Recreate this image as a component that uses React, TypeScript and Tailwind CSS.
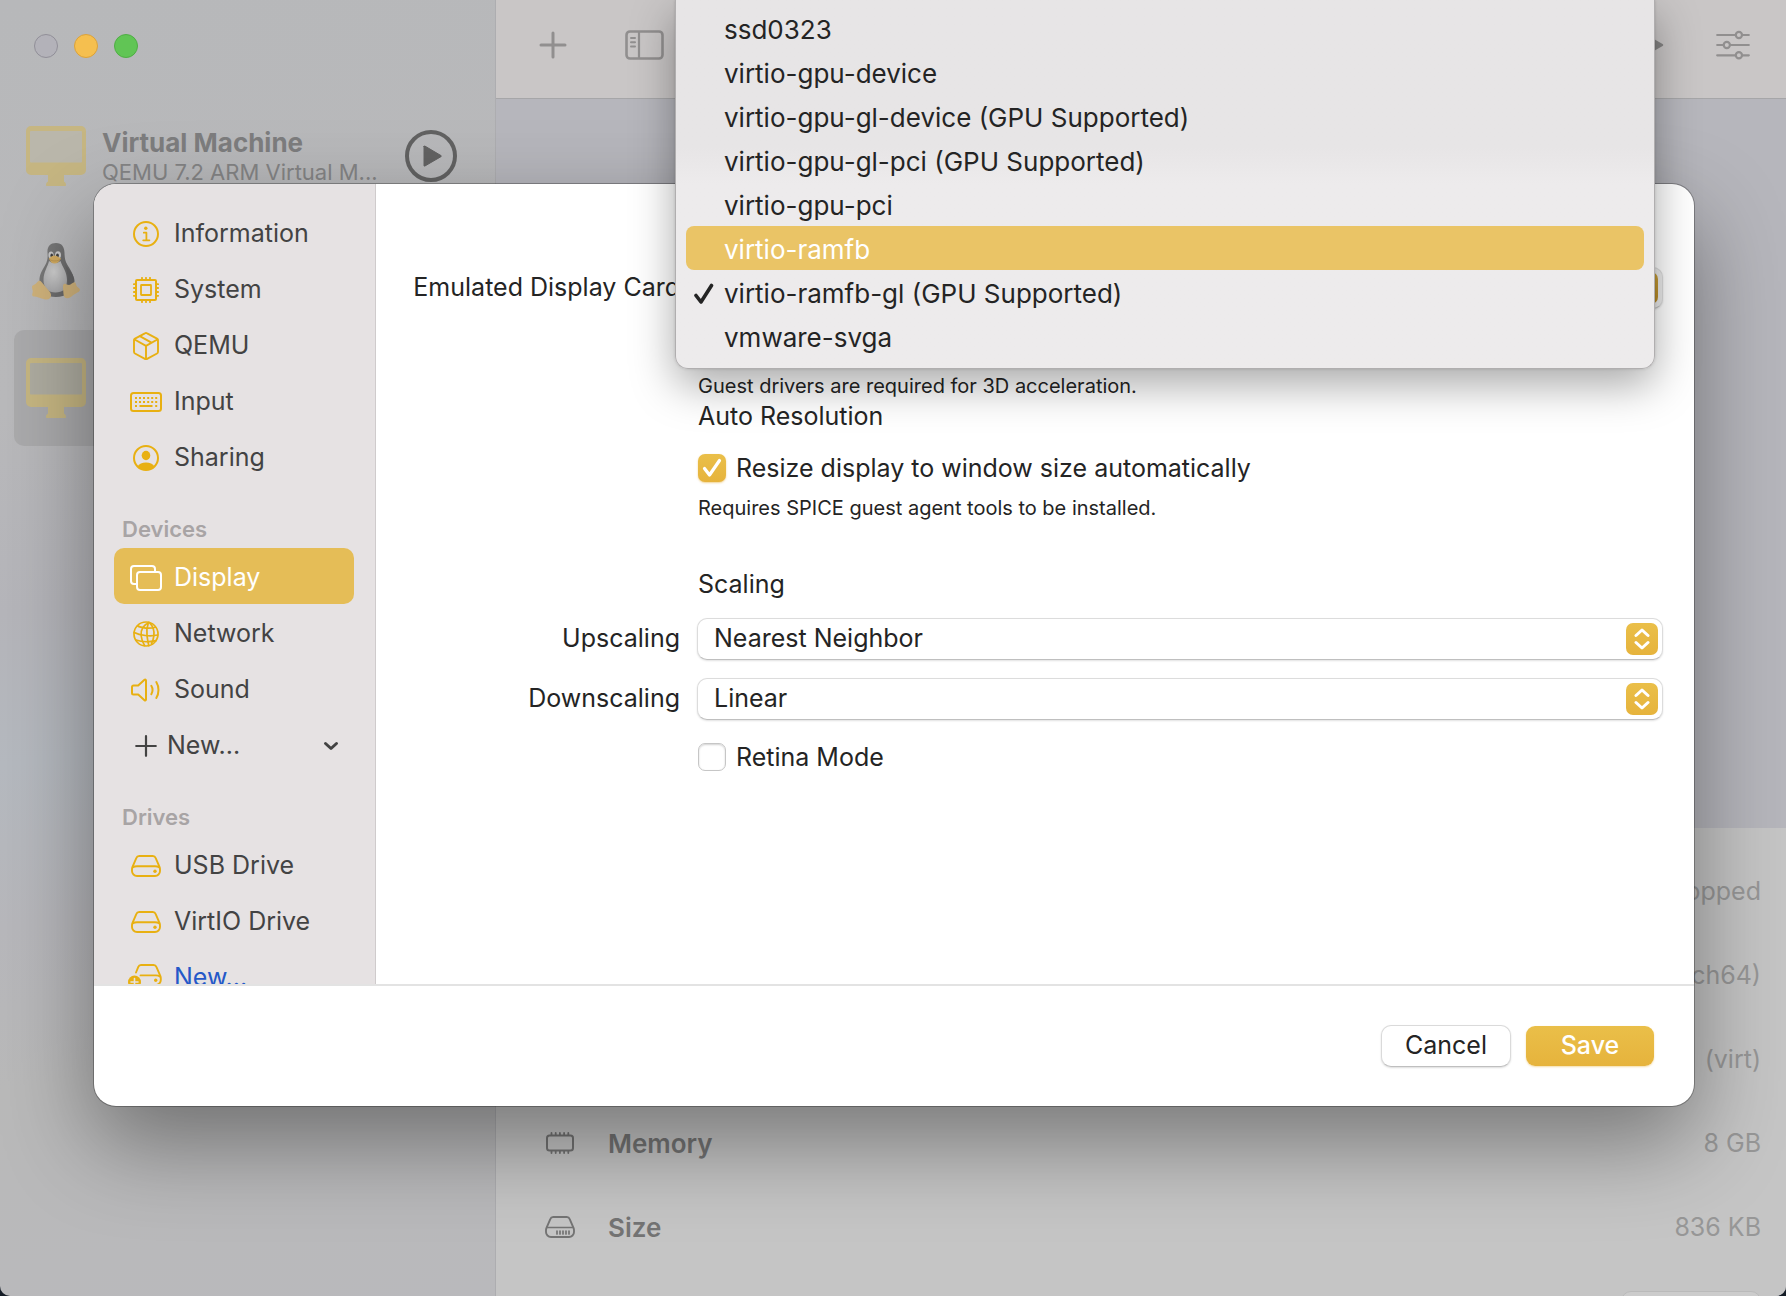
import React, { useId, useState } from "react";
import type { ReactNode } from "react";

/* ---------- icons ---------- */

type IconProps = { className?: string };

function Svg({ w, h, sw = 2, children, className = "" }: { w: number; h: number; sw?: number; children: ReactNode; className?: string }) {
  return (
    <svg
      width={w}
      height={h}
      viewBox={`0 0 ${w} ${h}`}
      fill="none"
      stroke="currentColor"
      strokeWidth={sw}
      strokeLinecap="round"
      strokeLinejoin="round"
      aria-hidden="true"
      className={`block shrink-0 ${className}`}
    >
      {children}
    </svg>
  );
}

const InfoIcon = () => (
  <Svg w={26} h={26}>
    <circle cx="13" cy="13" r="12" />
    <circle cx="12.8" cy="7.2" r="1.7" fill="currentColor" stroke="none" />
    <path d="M10.8 11.7h2.6v7.4M10.2 19.3h6.2" strokeWidth="1.8" />
  </Svg>
);

const CpuIcon = () => (
  <Svg w={26} h={26}>
    <rect x="3" y="3" width="20" height="20" rx="1" />
    <rect x="8" y="8" width="10" height="10" rx="0.5" strokeWidth="1.8" />
    <path d="M9 .8V3M13 .8V3M17 .8V3M9 23v2.2M13 23v2.2M17 23v2.2M.8 7.2H3M.8 11H3M.8 15H3M.8 18.8H3M23 7.2h2.2M23 11h2.2M23 15h2.2M23 18.8h2.2" strokeWidth="1.8" />
  </Svg>
);

const BoxIcon = () => (
  <Svg w={26} h={28} sw={1.9}>
    <path d="M11.9 1.3a2.2 2.2 0 0 1 2.2 0L24 6.6a2 2 0 0 1 1 1.8v11.3a2 2 0 0 1-1 1.8l-9.9 5.4a2.2 2.2 0 0 1-2.2 0L2 21.500a2 2 0 0 1-1-1.800V8.400a2 2 0 0 1 1-1.800z" />
    <path d="M1.600 7.500 13 13.800 24.400 7.500M13 13.800V27M6.800 4.200 18.500 10.700" />
  </Svg>
);

const KeyboardIcon = () => (
  <Svg w={32} h={20}>
    <rect x="1" y="1" width="30" height="18" rx="2.500" />
    <path
      d="M5 5h2v2H5zM9 5h2v2H9zM13 5h2v2h-2zM17.200 5h2v2h-2zM21.200 5h2v2h-2zM25.200 5h2v2h-2zM5 9h2v2H5zM9 9h2v2H9zM13 9h2v2h-2zM17.200 9h2v2h-2zM21.200 9h2v2h-2zM25.200 9h2v2h-2zM5 13h2v2H5zM9.500 13h13v2h-13zM25.200 13h2v2h-2z"
      fill="currentColor"
      stroke="none"
    />
  </Svg>
);

const PersonIcon = () => (
  <Svg w={26} h={26}>
    <circle cx="13" cy="13" r="12" />
    <ellipse cx="13" cy="10.500" rx="4.300" ry="4.700" fill="currentColor" stroke="none" />
    <path d="M4.500 21.400C6 18.800 9.200 17.400 13 17.400s7 1.400 8.500 4C19.500 23.700 16.500 25 13 25s-6.500-1.300-8.500-3.600z" fill="currentColor" stroke="none" />
  </Svg>
);

const WindowsIcon = () => (
  <Svg w={32} h={26}>
    <path d="M6 19H4a3 3 0 0 1-3-3V4a3 3 0 0 1 3-3h18a3 3 0 0 1 3 3v2" />
    <rect x="7" y="7" width="24" height="18" rx="3" />
  </Svg>
);

const GlobeIcon = () => (
  <Svg w={26} h={26} sw={1.700}>
    <circle cx="13" cy="13" r="12" />
    <path d="M16.200 1.500C10 4 7.500 9 8.200 15c.4 3.500 1.500 6.800 3.400 9.500M15.500 1.300c-1.500 4.200-2 8.500-1.500 13 .4 3.800 1 7 1.800 10.400M16.500 1.600c3.500 3.600 5 8 4.400 13-.4 3-1.200 5.600-2.400 8" />
    <path d="M4.500 4.800C7.800 7.200 17 8 22.300 6.200M1.200 11.500c5.600 3 16 4.200 23.600 2.500M3 19c4.800 1.800 13 2.200 20 .6" />
  </Svg>
);

const SpeakerIcon = () => (
  <Svg w={30} h={24}>
    <path d="M2.500 7.500h4.700l6.300-5.700c.7-.6 1.500-.2 1.500.7v19c0 .9-.8 1.300-1.500.7l-6.300-5.700H2.500A1.500 1.500 0 0 1 1 15V9a1.500 1.500 0 0 1 1.500-1.500z" />
    <path d="M20.300 7.800c1.500 2.500 1.500 5.900 0 8.400M25.300 4c2.900 4.700 2.900 11.300 0 16" />
  </Svg>
);

const driveBody = "M8.200 1h13.600a3 3 0 0 1 2.800 1.900l4 9.300c.3.800.4 1.500.4 2.300v1.500a5 5 0 0 1-5 5H6a5 5 0 0 1-5-5v-1.500c0-.8.1-1.500.4-2.300l4-9.300A3 3 0 0 1 8.200 1z";

const DriveIcon = () => (
  <Svg w={30} h={22} sw={1.900}>
    <path d={driveBody} />
    <path d="M2 12.300c1.100-.8 2.400-1 4-1h18c1.600 0 2.900.2 4 1" />
    <circle cx="24" cy="16.300" r="1.700" fill="currentColor" stroke="none" />
  </Svg>
);

const DriveAddIcon = () => (
  <svg width="36" height="28" viewBox="-3 0 36 28" fill="none" stroke="currentColor" strokeWidth="1.900" strokeLinecap="round" strokeLinejoin="round" aria-hidden="true" className="block shrink-0">
    <path d="M5 8.500l2.300-5.600A3 3 0 0 1 10 1h12.600a3 3 0 0 1 2.800 1.900l4 9.300c.3.800.4 1.500.4 2.300v1.500a5 5 0 0 1-5 5H11" />
    <path d="M9.500 11.400h15.400c1.600 0 2.900.2 4 1" />
    <circle cx="24.700" cy="16.300" r="1.700" fill="currentColor" stroke="none" />
    <circle cx="3.500" cy="18" r="6.500" fill="currentColor" stroke="none" />
    <path d="M3.500 14.500v7M0 18h7" stroke="#e6e2e3" strokeWidth="1.600" />
  </svg>
);

const DiskIcon = () => (
  <Svg w={30} h={22} sw={1.900}>
    <path d={driveBody} />
    <path d="M2 11.500h26M12 15v3M15 15v3M18 15v3M21 15v3M24 15v3" strokeWidth="1.700" />
  </Svg>
);

const MemoryIcon = () => (
  <Svg w={28} h={22}>
    <rect x="1" y="3.500" width="26" height="15" rx="2.500" />
    <path d="M5.500 1v2M9.700 1v2M13.900 1v2M18.100 1v2M22.300 1v2M5.500 19v2M9.700 19v2M13.900 19v2M18.100 19v2M22.300 19v2" strokeWidth="1.800" />
  </Svg>
);

const MonitorIcon = ({ className = "", screen = "#bab7ab" }: IconProps & { screen?: string }) => (
  <svg width="60" height="60" viewBox="0 0 60 60" aria-hidden="true" className={`block shrink-0 ${className}`}>
    <path d="M5 0h50a5 5 0 0 1 5 5v39a5 5 0 0 1-5 5H38v6.500c1.500 1 2 2 2 3.500 0 .6-.3 1-1 1H21c-.7 0-1-.4-1-1 0-1.500.5-2.500 2-3.500V49H5a5 5 0 0 1-5-5V5a5 5 0 0 1 5-5z" fill="#c6b682" />
    <rect x="4" y="5" width="52" height="31.500" rx="1" fill={screen} />
  </svg>
);

const Penguin = () => (
  <svg width="48" height="58" viewBox="0 0 48 58" aria-hidden="true" className="block shrink-0">
    <defs>
      <radialGradient id="belly" cx="0.450" cy="0.350" r="0.750">
        <stop offset="0" stopColor="#cdcdcd" />
        <stop offset="1" stopColor="#a2a2a4" />
      </radialGradient>
      <linearGradient id="coat" x1="0" y1="0" x2="1" y2="0.400">
        <stop offset="0" stopColor="#7d7d7d" />
        <stop offset="1" stopColor="#676768" />
      </linearGradient>
    </defs>
    <path d="M24 0c-6 0-9 4-8.500 9.500.3 5 .3 8-2.500 13-3 5-6 10-5.500 16C8 50 14 54 24 54s17-5 18-14c.8-7-3.500-13-6.500-18-2.500-4-2.800-7-3-12C32.300 4 30 0 24 0z" fill="url(#coat)" />
    <path d="M17 18c-1 5-5.500 11-5.500 19 0 8 5 12.500 12 12.500S35 46 35 37c0-8-4.500-13-6.500-19-3 2.500-8.500 2.500-11.500 0z" fill="url(#belly)" />
    <path d="M33 22c4 5 9.500 10 9.500 16 0 3-3 4.500-6 3.500-1-6-.5-13-3.500-19.500z" fill="#636364" />
    <ellipse cx="19" cy="12" rx="2.600" ry="3.600" fill="#c9c9c9" />
    <ellipse cx="26" cy="12" rx="3" ry="3.800" fill="#c9c9c9" />
    <ellipse cx="19.700" cy="12.500" rx="1.300" ry="1.900" fill="#3f3f40" />
    <ellipse cx="25.500" cy="12.500" rx="1.400" ry="2" fill="#3f3f40" />
    <path d="M17 15.500c2-2 3.600-3 5.500-3s4.500 1.500 6.500 3c-1.500 3-4 5-6.500 5-2.600 0-4.500-2-5.500-5z" fill="#d2ab60" />
    <path d="M17.500 16.500c3.500 2 7.500 2 11-.3" stroke="#b48f4d" strokeWidth="0.800" fill="none" />
    <path d="M0 44c0-2 3-2 5-4.500 1.500-2 3-2.500 4.500-.5l8 9.500c3 4 1.500 8-3 8-4 0-7-2.500-12-3-2.500-.3-2.700-1.500-2-3.500.8-2.500-.5-4-.5-6z" fill="#cfb27b" />
    <path d="M32 41c2-1 2.500 1 5 1s4-3.500 6-2.500c1.500.8.5 2.500 2 4s3 2 3 3.500c-.5 2.500-5.500 3.500-8.500 6.500-3.500 3-8 2-8-2.500 0-4-1.500-9 .5-10z" fill="#cfb27b" />
  </svg>
);

const PlusIcon = () => (
  <Svg w={28} h={28} sw={3}>
    <path d="M14 2v24M2 14h24" />
  </Svg>
);

const SidebarIcon = () => (
  <Svg w={40} h={30} sw={2.600}>
    <rect x="1.500" y="1.500" width="36" height="27" rx="3.500" />
    <path d="M14 2v26" strokeWidth="2.200" />
    <path d="M6 8h4M6 12.300h4M6 16.600h4" strokeWidth="2" />
  </Svg>
);

const SlidersIcon = () => (
  <svg width="34" height="30" viewBox="0 0 34 30" fill="none" stroke="currentColor" strokeWidth="2.200" strokeLinecap="round" aria-hidden="true" className="block shrink-0">
    <path d="M1.200 5h18.200M26.400 5h6.400M1.200 15h6M14.400 15h18.400M1.200 25.300h18.200M26.400 25.300h6.400" />
    <circle cx="22.900" cy="5" r="3.100" />
    <circle cx="10.800" cy="15" r="3.100" />
    <circle cx="22.900" cy="25.300" r="3.100" />
  </svg>
);

/* ---------- settings sidebar ---------- */

function NavItem({ icon, label, active = false, link = false }: { icon: ReactNode; label: string; active?: boolean; link?: boolean }) {
  return (
    <li>
      <button
        type="button"
        aria-current={active ? "page" : undefined}
        className={`flex h-14 w-full items-center gap-3 rounded-[10px] pt-[3px] pl-4 text-left text-[25px] ${active ? "bg-[#e5bd57] text-white" : link ? "text-[#2458c8]" : "text-[#434343]"}`}
      >
        <span className={`flex w-8 shrink-0 justify-center ${active ? "text-white" : "text-[#e8b012]"}`}>{icon}</span>
        {label}
      </button>
    </li>
  );
}

function NavHeading({ children }: { children: ReactNode }) {
  return <h2 className="flex h-16 items-end pb-1 pl-2 text-[22px] leading-[30px] font-semibold text-[#a8a4a5]">{children}</h2>;
}

/* ---------- form controls ---------- */

const labelClass = "pb-[2px] text-right text-[25px] leading-8 whitespace-nowrap text-[#242424]";

function Select({ label, options, pressed = false }: { label: string; options: string[]; pressed?: boolean }) {
  const id = useId();
  return (
    <>
      <label htmlFor={id} className={labelClass}>
        {label}
      </label>
      <div className="relative -mx-px">
        <select
          id={id}
          className={`block h-[42px] w-full appearance-none rounded-[10px] border border-[#dcdcdc] border-b-[#bfbfbf] pr-12 pb-[2px] pl-4 text-[25px] leading-[38px] text-[#242424] shadow-[0_1px_2px_rgba(0,0,0,0.12)] ${pressed ? "bg-[#ededed]" : "bg-white"}`}
        >
          {options.map((o) => (
            <option key={o}>{o}</option>
          ))}
        </select>
        <span
          className={`pointer-events-none absolute top-[5px] right-[5px] flex size-8 items-center justify-center rounded-[7px] bg-linear-to-b text-white ${pressed ? "from-[#c9a03a] to-[#b98a24]" : "from-[#eabf49] to-[#e6b33c]"}`}
        >
          <Svg w={16} h={24} sw={3}>
            <path d="M2 8.500l6-5.500 6 5.500M2 15.500l6 5.500 6-5.500" />
          </Svg>
        </span>
      </div>
    </>
  );
}

function Checkbox({ label, initial }: { label: string; initial: boolean }) {
  const [on, setOn] = useState(initial);
  return (
    <label className="flex h-8 items-center gap-[10px] text-[25px] text-[#242424]">
      <span className="relative flex">
        <input
          type="checkbox"
          checked={on}
          onChange={(e) => setOn(e.target.checked)}
          className="size-7 appearance-none rounded-[7px] border border-[#c6c6c6] bg-white shadow-[inset_0_1px_2px_rgba(0,0,0,0.18)] checked:border-0 checked:bg-linear-to-b checked:from-[#eabf49] checked:to-[#e6b33c] checked:shadow-[0_1px_2px_rgba(230,170,40,0.5)]"
        />
        {on && (
          <span className="pointer-events-none absolute inset-0 flex items-center justify-center text-white">
            <Svg w={20} h={20} sw={3.200}>
              <path d="M2.500 10.500L7.500 17 17.500 2.500" />
            </Svg>
          </span>
        )}
      </span>
      <span className="pt-[2px]">{label}</span>
    </label>
  );
}

/* ---------- pop-up menu ---------- */

const cards = [
  "ssd0323",
  "virtio-gpu-device",
  "virtio-gpu-gl-device (GPU Supported)",
  "virtio-gpu-gl-pci (GPU Supported)",
  "virtio-gpu-pci",
  "virtio-ramfb",
  "virtio-ramfb-gl (GPU Supported)",
  "vmware-svga",
];

function CardMenu() {
  return (
    <div
      role="menu"
      aria-label="Emulated Display Card"
      className="absolute top-0 right-[131px] left-[675px] rounded-b-[13px] border border-t-0 border-[#b0aeaf] bg-linear-to-b from-[#e7e5e6] from-40% to-[#edebec] to-50% px-[10px] pt-[6px] pb-[10px] shadow-[0_16px_44px_rgba(0,0,0,0.34),0_0_3px_rgba(0,0,0,0.15)]"
    >
      {cards.map((c) => {
        const hot = c === "virtio-ramfb";
        const checked = c.startsWith("virtio-ramfb-gl");
        return (
          <button
            key={c}
            type="button"
            role="menuitemradio"
            aria-checked={checked}
            className={`flex h-11 w-full items-center rounded-lg pt-[3px] text-left text-[26px] ${hot ? "bg-[#eac466] text-white" : "text-[#242424]"}`}
          >
            <span className="flex w-[38px] shrink-0 pl-2">
              {checked && (
                <Svg w={20} h={22} sw={3.600}>
                  <path d="M2 12.500L7 19 17.500 2.500" />
                </Svg>
              )}
            </span>
            {c}
          </button>
        );
      })}
    </div>
  );
}

/* ---------- main window behind the sheet ---------- */

const details: { label: string; value: string; icon: ReactNode }[] = [
  { label: "Status", value: "Stopped", icon: <MemoryIcon /> },
  { label: "Architecture", value: "ARM64 (aarch64)", icon: <MemoryIcon /> },
  { label: "Machine", value: "(virt)", icon: <MemoryIcon /> },
  { label: "Memory", value: "8 GB", icon: <MemoryIcon /> },
  { label: "Size", value: "836 KB", icon: <DiskIcon /> },
];

function MainWindow() {
  return (
    <div className="flex h-full">
      <aside className="w-[496px] shrink-0 border-r border-[#adadb0] bg-[linear-gradient(172deg,#b7b8ba_0%,#b9b9bb_30%,#b5b5ba_45%,#b5b9bf_56%,#b7b7bb_68%,#b9b9b9_80%,#b9b9bc_100%)]">
        <div className="flex gap-4 pt-[34px] pl-[34px]">
          <button type="button" aria-label="Close" className="size-6 rounded-full border border-[#918f98] bg-[#b3b2b9]" />
          <button type="button" aria-label="Minimize" className="size-6 rounded-full border border-[#dba23a] bg-[#f5bf4f]" />
          <button type="button" aria-label="Zoom" className="size-6 rounded-full border border-[#4fae44] bg-[#61c555]" />
        </div>
        <ul className="mt-10 px-[14px]">
          <li className="flex h-[116px] items-center pr-6 pl-3">
            <MonitorIcon />
            <div className="ml-4 min-w-0 flex-1">
              <p className="text-[26px] leading-8 font-bold text-[#7d7d7e]">Virtual Machine</p>
              <p className="text-[22px] leading-[26px] whitespace-nowrap text-[#848485]">QEMU 7.2 ARM Virtual M...</p>
            </div>
            <button type="button" aria-label="Run" className="text-[#626262]">
              <Svg w={52} h={52} sw={4}>
                <circle cx="26" cy="26" r="24" />
                <path d="M19 16.500v19c0 .6.400.8.900.500l16-9.300c.5-.3.500-.9 0-1.200l-16-9.400c-.5-.3-.9-.1-.9.400z" fill="currentColor" strokeWidth="1" />
              </Svg>
            </button>
          </li>
          <li className="flex h-[116px] items-center pl-[18px]">
            <Penguin />
          </li>
          <li className="flex h-[116px] items-center rounded-[10px] bg-[#aaaaac] pl-3">
            <MonitorIcon screen="#aeaca0" />
          </li>
        </ul>
      </aside>

      <main className="flex min-w-0 flex-1 flex-col bg-[#b6b6bc]">
        <header className="flex h-[99px] shrink-0 items-center border-b border-[#a6a6a8] bg-[#c9c6c6] pr-9 pb-[9px] pl-[43px] text-[#918f8f]">
          <button type="button" aria-label="New">
            <PlusIcon />
          </button>
          <button type="button" aria-label="Toggle sidebar" className="ml-[58px]">
            <SidebarIcon />
          </button>
          <button type="button" aria-label="Run" className="ml-auto text-[#858484]">
            <svg width="22" height="24" viewBox="0 0 22 24" fill="currentColor" aria-hidden="true" className="block">
              <path d="M1 1.500v21c0 1 .8 1.300 1.600.800l18-10.300c.9-.5.900-1.500 0-2l-18-10.300C1.800.200 1 .500 1 1.500z" />
            </svg>
          </button>
          <button type="button" aria-label="Settings" className="ml-[52px]">
            <SlidersIcon />
          </button>
        </header>
        <div className="flex-1" />
        <dl className="h-[468px] shrink-0 overflow-hidden bg-[#c5c5c5] pt-[22px] pr-[25px] pl-[49px]">
          {details.map((d) => (
            <div key={d.label} className="flex h-[84px] items-center text-[25px]">
              <dt className="flex items-center pb-[2px] text-[26px] font-semibold text-[#747474]">
                <span className="mr-[33px] flex w-[30px] justify-center">{d.icon}</span>
                {d.label}
              </dt>
              <dd className="ml-auto text-[#979797]">{d.value}</dd>
            </div>
          ))}
          <div className="flex h-[84px] items-start justify-end pt-[21px]">
            <button type="button" aria-label="Browse" className="h-10 w-[140px] rounded-[10px] border border-[#bababa] bg-[#cccccc]" />
          </div>
        </dl>
      </main>
    </div>
  );
}

/* ---------- settings sheet ---------- */

function SettingsSheet() {
  return (
    <section
      role="dialog"
      aria-label="Virtual machine settings"
      className="flex min-w-0 flex-1 flex-col overflow-hidden rounded-[22px] bg-white shadow-[0_0_0_1px_rgba(0,0,0,0.28),0_36px_90px_rgba(0,0,0,0.4)]"
    >
      <div className="flex min-h-0 flex-1">
        <nav aria-label="Settings" className="w-[282px] shrink-0 overflow-hidden border-r border-[#cfcbcc] bg-[#e6e2e3] pt-5 pr-[21px] pl-5">
          <ul>
            <NavItem icon={<InfoIcon />} label="Information" />
            <NavItem icon={<CpuIcon />} label="System" />
            <NavItem icon={<BoxIcon />} label="QEMU" />
            <NavItem icon={<KeyboardIcon />} label="Input" />
            <NavItem icon={<PersonIcon />} label="Sharing" />
          </ul>
          <NavHeading>Devices</NavHeading>
          <ul>
            <NavItem icon={<WindowsIcon />} label="Display" active />
            <NavItem icon={<GlobeIcon />} label="Network" />
            <NavItem icon={<SpeakerIcon />} label="Sound" />
            <li>
              <button type="button" aria-haspopup="menu" className="flex h-14 w-full items-center pt-[3px] pr-[15px] pl-[21px] text-[25px] text-[#434343]">
                <Svg w={22} h={22} sw={2.200}>
                  <path d="M11 1.200v19.600M1.200 11h19.600" />
                </Svg>
                <span className="ml-[10px]">New...</span>
                <Svg w={16} h={12} sw={3} className="ml-auto">
                  <path d="M2.500 3.500L8 8.500l5.500-5" />
                </Svg>
              </button>
            </li>
          </ul>
          <NavHeading>Drives</NavHeading>
          <ul>
            <NavItem icon={<DriveIcon />} label="USB Drive" />
            <NavItem icon={<DriveIcon />} label="VirtIO Drive" />
            <NavItem icon={<DriveAddIcon />} label="New..." link />
          </ul>
        </nav>

        <form className="grid min-w-0 flex-1 auto-rows-min grid-cols-[271px_1fr] items-center gap-x-[18px] pt-[83px] pr-8 pl-[33px] text-[#242424]">
          <Select label="Emulated Display Card" options={["virtio-ramfb-gl (GPU Supported)"]} pressed />
          <p className="col-start-2 mt-[65px] text-xl leading-6">Guest drivers are required for 3D acceleration.</p>
          <h3 className="col-start-2 mt-[2px] text-[25px] leading-8">Auto Resolution</h3>
          <div className="col-start-2 mt-5">
            <Checkbox label="Resize display to window size automatically" initial />
          </div>
          <p className="col-start-2 mt-3 text-xl leading-6">Requires SPICE guest agent tools to be installed.</p>
          <h3 className="col-start-2 mt-12 mb-[18px] text-[25px] leading-8">Scaling</h3>
          <Select label="Upscaling" options={["Nearest Neighbor", "Linear"]} />
          <div className="col-span-2 h-[18px]" />
          <Select label="Downscaling" options={["Linear", "Nearest Neighbor"]} />
          <div className="col-start-2 mt-[21px]">
            <Checkbox label="Retina Mode" initial={false} />
          </div>
        </form>
      </div>
      <footer className="flex h-[122px] shrink-0 items-center justify-end gap-[15px] border-t-2 border-[#e3e3e3] pr-10">
        <button type="button" className="h-[42px] w-[130px] rounded-[10px] border border-[#dadada] border-b-[#bfbfbf] bg-white pb-[2px] text-[25px] leading-9 text-[#242424] shadow-[0_1px_2px_rgba(0,0,0,0.14)]">
          Cancel
        </button>
        <button type="button" className="h-10 w-32 rounded-[9px] bg-linear-to-b from-[#eabf49] to-[#e6b33c] pb-[2px] text-[25px] leading-9 font-medium text-white shadow-[0_1px_2px_rgba(230,170,40,0.4)]">
          Save
        </button>
      </footer>
    </section>
  );
}

export default function App() {
  return (
    <div className="h-screen bg-[#141c26] font-['Inter',sans-serif]">
      <div className="relative h-full overflow-hidden rounded-b-[10px]">
        <MainWindow />
        <div className="absolute inset-0 flex pt-[184px] pr-[92px] pb-[190px] pl-[94px]">
          <SettingsSheet />
        </div>
        <CardMenu />
      </div>
    </div>
  );
}
